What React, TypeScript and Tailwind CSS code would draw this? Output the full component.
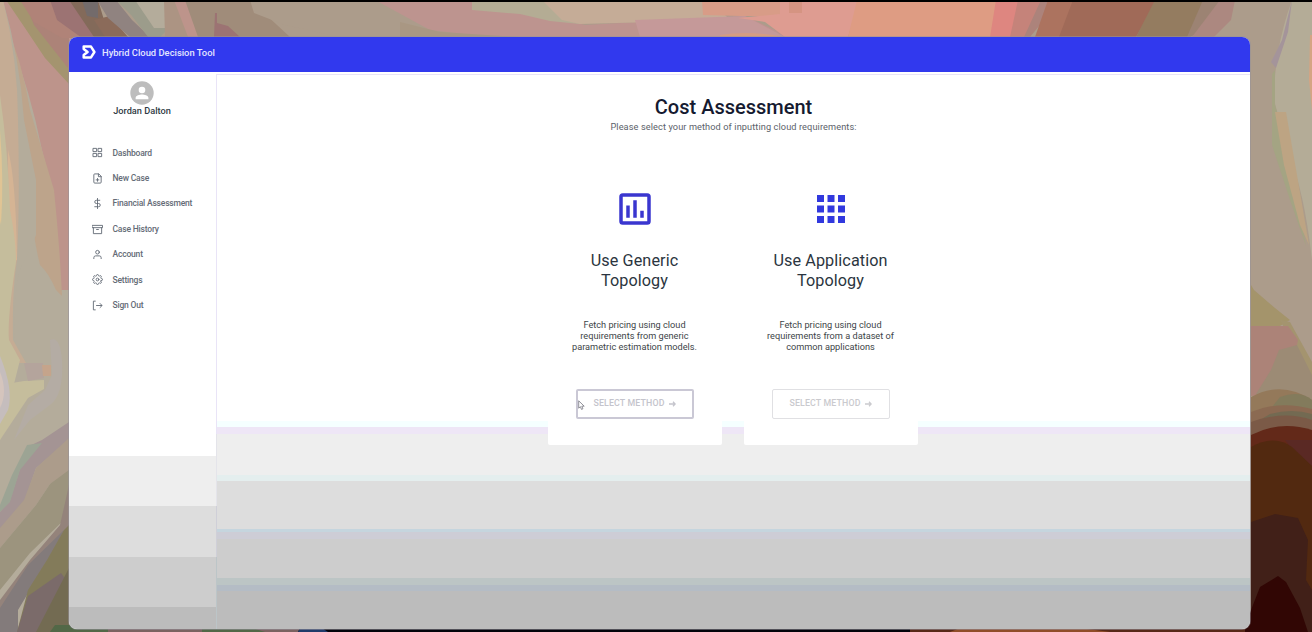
import React from "react";
import { FiGrid, FiFilePlus, FiDollarSign, FiArchive, FiUser, FiSettings } from "react-icons/fi";
import { MdApps } from "react-icons/md";

function SignOutIcon({ className }: { className?: string }) {
  return (
    <svg className={className} viewBox="0 0 24 24" fill="none" stroke="currentColor" strokeWidth="2">
      <path d="M8 2.500H3v19h5M9 12h13M17 7l5 5-5 5" />
    </svg>
  );
}

function ChartIcon({ className }: { className?: string }) {
  return (
    <svg className={className} viewBox="0 0 24 24" fill="currentColor">
      <path
        fillRule="evenodd"
        d="M5 3h14a2 2 0 0 1 2 2v14a2 2 0 0 1-2 2H5a2 2 0 0 1-2-2V5a2 2 0 0 1 2-2Zm0 2v14h14V5Zm2 5h2v7H7Zm4-3h2v10h-2Zm4 6h2v4h-2Z"
      />
    </svg>
  );
}

const navItems = [
  { label: "Dashboard", icon: FiGrid },
  { label: "New Case", icon: FiFilePlus },
  { label: "Financial Assessment", icon: FiDollarSign },
  { label: "Case History", icon: FiArchive },
  { label: "Account", icon: FiUser },
  { label: "Settings", icon: FiSettings },
  { label: "Sign Out", icon: SignOutIcon },
];

function Wallpaper() {
  return (
    <svg className="absolute inset-0 h-full w-full" viewBox="0 0 1312 632" preserveAspectRatio="none">
      <rect width="1312" height="632" fill="#ac9c8b" />
      {/* left side */}
      <path d="M0 0H80V632H0Z" fill="#b4ac9b" />
      <path d="M0 0H80V290H60Q56 200 42 150Q30 90 10 40Z" fill="#bd948b" />
      <path d="M4 20Q22 60 30 110Q42 150 54 190Q60 250 62 296L56 290Q48 272 40 265Q34 240 34 230Q28 120 4 20Z" fill="#bda48b" />
      <path d="M0 0H3Q20 60 24 120Q28 140 36 180V235Q30 250 22 265Q14 280 14 340L26 362H0Z" fill="#b4ac9b" />
      <path d="M0 0H3Q18 60 18 120Q20 200 17 260Q12 290 13 340L26 363H0Z" fill="#c5ac94" />
      <path d="M8 150Q16 180 17 260L12 262Q8 240 8 150Z" fill="#d5b494" />
      <path d="M0 95Q8 150 10 210Q16 240 16 262Q7 320 9 340L20 360L0 440Z" fill="#c5bd9c" />
      <path d="M0 130Q4 180 1 225L0 220Z" fill="#e0c494" />
      <path d="M24 381L44 380V389L28 398L10 425L0 440V385Z" fill="#c5bd9c" />
      <path d="M0 356Q14 390 8 410L0 424Z" fill="#c5bdbd" />
      <path d="M0 372Q8 392 0 408Z" fill="#d5c5bd" />
      <path d="M50 340Q60 335 62 360Q64 395 50 405L30 420L14 440L28 405L45 390L52 375Z" fill="#b4aca4" />
      <path d="M24 363H43L44 378L28 381Z" fill="#b4a49c" />
      <path d="M42 365H51V376H43Z" fill="#c5a48b" />
      <path d="M69 422L42 440L27 447L10 500L0 512V530L25 500L36 468L69 440Z" fill="#a49494" />
      <path d="M27 445L42 443L20 470L10 502L0 512V505L12 475Z" fill="#9ca494" />
      <path d="M69 438L36 468L24 500L0 528V548L36 505L50 484L69 475Z" fill="#ac9c8b" />
      <path d="M69 470L50 484L36 505L0 548V590L30 553L69 515Z" fill="#9c947e" />
      <path d="M69 485L60 525L30 560L0 600V614L18 600L69 540Z" fill="#94837b" />
      <path d="M64 530L48 560L18 610V632H0V608L28 565Z" fill="#837b7b" />
      <path d="M64 530L47 560L28 590L17 632H69V525Z" fill="#837b5a" />
      <path d="M61 573L28 596L17 632H40L69 584Z" fill="#7b6b6a" />
      <path d="M69 568L36 632H69Z" fill="#736b52" />
      {/* top left */}
      <path d="M8 0H53L69 28V80L50 60L26 28Z" fill="#ac8378" />
      <path d="M6 0H24L34 25L68 68L69 84L45 58L25 28Z" fill="#a4946f" />
      <path d="M20 0H72L88 28L94 38H62L34 22Z" fill="#b08378" />
      <path d="M50 0H70L98 38H82L57 20Z" fill="#9c7373" />
      <path d="M69 0H98L104 20L121 37H94Z" fill="#836a5a" />
      <path d="M82 0H98V18L87 16Z" fill="#736b6b" />
      <path d="M94 20L110 16L128 37H105Z" fill="#8b6b5a" />
      <path d="M97 0H116L132 20L150 37H130L108 18Z" fill="#908380" />
      <path d="M116 0H164L169 28L160 37H148L132 16Z" fill="#9c9c8b" />
      <path d="M135 0H164L169 28H154Z" fill="#b4ac9b" />
      <path d="M164 0H174L190 37H165Z" fill="#ac9483" />
      <path d="M174 0H185L202 37H188Z" fill="#bd948b" />
      <path d="M185 0H250L290 37H198Z" fill="#a08c7a" />
      <path d="M215 13H217V23L228 26L240 37H214Z" fill="#9c7373" />
      {/* top centre */}
      <path d="M250 0H380L460 37H340L285 25L254 13Z" fill="#ac9c8b" />
      <path d="M375 0H486L585 25L745 16L790 37H490L430 30Z" fill="#bd948f" />
      <path d="M400 22L440 32L520 37H400Z" fill="#a99783" />
      <path d="M472 0H580V24L550 21L520 14L472 10Z" fill="#b4ac94" />
      <path d="M542 0H710L728 18L690 21L580 24L562 20Z" fill="#c5ac97" />
      <path d="M702 0H790V16H740L703 15Z" fill="#d89c87" />
      <path d="M635 20L745 16L785 37H640Z" fill="#c59999" />
      <path d="M720 35Q750 30 784 37H720Z" fill="#d59c83" />
      <path d="M780 0H860L848 37H785L765 22L738 18L780 14Z" fill="#de9c91" />
      <path d="M789 2H802V13H789Z" fill="#d59482" />
      <path d="M857 0H998L994 37H848Z" fill="#de9c83" />
      <path d="M996 0H1020L1012 37H990Z" fill="#de8680" />
      <path d="M1018 0H1042L1030 37H1010Z" fill="#c5837a" />
      <path d="M1041 0H1054L1044 20L1030 37H1024Z" fill="#ac837b" />
      <path d="M1048 0H1075L1061 37H1035Z" fill="#ac735f" />
      <path d="M1073 0H1158L1136 37H1059Z" fill="#a06a58" />
      <path d="M1155 0H1205L1190 37H1136Z" fill="#947c60" />
      <path d="M1203 0H1222L1205 30L1190 37H1187Z" fill="#9c8373" />
      <path d="M1220 0H1235L1231 20L1214 37H1192Z" fill="#ac8880" />
      {/* right side */}
      <path d="M1292 0H1312V260Q1304 190 1290 160L1274 100Q1274 50 1292 0Z" fill="#b4ac97" />
      <path d="M1292 0L1288 32L1276 68L1271 62L1282 40Z" fill="#a4949a" />
      <path d="M1272 74L1275 70L1275 105L1290 155L1306 246L1290 200L1272 145Z" fill="#a4a483" />
      <path d="M1275 112H1286L1297 175L1309 245L1300 225L1284 165Z" fill="#bda483" />
      <path d="M1310 35H1312V110L1309 80Z" fill="#d5a483" />
      <path d="M1251 285L1254 290L1275 308L1290 320L1280 326H1251Z" fill="#a4946b" />
      <path d="M1280 320L1290 322L1312 362V380L1296 350Z" fill="#a4946f" />
      <path d="M1251 326H1288L1298 340L1296 350L1280 350L1262 395L1251 396Z" fill="#ac8378" />
      <path d="M1279 350L1297 345L1312 375V405L1270 394H1256L1271 370Z" fill="#9c8b75" />
      <path d="M1251 397Q1282 380 1312 400V415L1280 405L1251 415Z" fill="#94795a" />
      <path d="M1280 397Q1300 390 1312 400V412H1268Z" fill="#837b5c" />
      <path d="M1251 412Q1280 400 1312 409V425H1251Z" fill="#8b6a52" />
      <path d="M1270 414Q1292 408 1312 414V420H1260Z" fill="#736a52" />
      <path d="M1251 422Q1285 410 1312 420V450H1251Z" fill="#7b5a47" />
      <path d="M1251 435Q1280 420 1312 430V632H1251Z" fill="#632919" />
      <path d="M1285 440H1312V466L1300 460Z" fill="#5a2924" />
      <path d="M1251 447Q1275 434 1292 447L1312 466V632H1251Z" fill="#522910" />
      <path d="M1251 522L1275 514L1298 518L1308 540L1306 580L1312 590V632H1251Z" fill="#412018" />
      <path d="M1251 610L1260 587L1278 576L1286 582L1300 608L1308 632H1244Z" fill="#310604" />
      {/* bottom edge */}
      <path d="M55 625H290L300 632H50Z" fill="#526847" />
      <path d="M108 628H202V632H108ZM252 628H300V632H265Z" fill="#7b6260" />
      <path d="M300 628H910V632H298Z" fill="#02030a" />
      <path d="M300 628H322L328 632H298Z" fill="#203b6a" />
      <path d="M910 628H1245V632H910Z" fill="#572817" />
      <path d="M960 628H1080L1110 632H950Z" fill="#904d28" />
      <rect width="1312" height="2" fill="#000" />
    </svg>
  );
}

function MethodCard({
  icon: Icon,
  iconClass,
  title,
  description,
  active,
}: {
  icon: React.ComponentType<{ className?: string }>;
  iconClass: string;
  title: string[];
  description: string[];
  active?: boolean;
}) {
  return (
    <section className="flex h-[265px] w-[174px] flex-col items-center rounded-b-[2px] bg-white text-center">
      <div className="flex h-[57px] items-center justify-center">
        <Icon className={iconClass} />
      </div>
      <h2 className="mt-[14px] text-[16.200px] leading-5 tracking-[0.1px] text-[#2b3540]">
        {title.map((line) => (
          <span key={line} className="block whitespace-nowrap">{line}</span>
        ))}
      </h2>
      <p className="mt-[28px] text-[9.200px] leading-[11px] text-[#404548]">
        {description.map((line) => (
          <span key={line} className="block whitespace-nowrap">{line}</span>
        ))}
      </p>
      <div className="mt-[37px]">
        <button
          className={
            active
              ? "relative flex h-[30px] w-[118px] items-center justify-center gap-[4px] rounded-[2px] border-2 border-[#cac8d5] text-[8.800px] font-medium tracking-[0.150px] text-[#c4c4cc]"
              : "relative flex h-[30px] w-[118px] items-center justify-center gap-[4px] rounded-[2px] border border-[#e0e0e3] text-[8.800px] font-medium tracking-[0.150px] text-[#cacace]"
          }
        >
          <span className="whitespace-nowrap">SELECT METHOD</span>
          <svg className="h-[6px] w-[7px]" viewBox="0 0 7 6" fill="none" stroke="currentColor" strokeWidth="1.3">
            <path d="M0 3H6.200M4 .8 6.200 3 4 5.200" />
          </svg>
          {active && (
            <svg className="absolute top-[9px] left-0 h-[11px] w-[7px]" viewBox="0 0 7 11">
              <path d="M.7.800v7.400l1.700-1.500 1.100 2.700 1.400-.6-1.100-2.600h2.400Z" fill="#fff" stroke="#85858d" strokeWidth=".9" />
            </svg>
          )}
        </button>
      </div>
    </section>
  );
}

export default function App() {
  return (
    <div className="relative h-[632px] w-[1312px] overflow-hidden font-['Roboto','Liberation_Sans',sans-serif]">
      <Wallpaper />
      <div className="relative flex h-full flex-col pt-[37px] pr-[62px] pb-[3px] pl-[69px]">
        <div className="flex h-[592px] w-[1181px] flex-col overflow-hidden rounded-[8px] bg-white shadow-[0_0_0_1px_rgba(150,145,155,0.55)]">
          <header className="flex h-[35px] shrink-0 items-center bg-[#3139ee] pl-[13px] text-white">
            <svg className="mb-[5px] h-[14px] w-[14px]" viewBox="0 0 14 14" fill="none" stroke="white" strokeWidth="2.500" strokeLinejoin="round">
              <path d="M1.700 1.600H9L12.400 7 9 12.400H1.700V10L5.600 7 1.700 4Z" />
            </svg>
            <span className="mb-[2px] ml-[6px] text-[9.400px] font-medium whitespace-nowrap text-[#e4e6ff]">
              Hybrid Cloud Decision Tool
            </span>
          </header>
          <div className="flex min-h-0 flex-1">
            <aside className="flex w-[147px] shrink-0 flex-col bg-[linear-gradient(to_bottom,#fff_384px,#eee_384px,#eee_434px,#ddd_434px,#ddd_485px,#cdcdcd_485px,#cdcdcd_535px,#bcbcbc_535px)]">
              <div className="flex flex-col items-center pt-[9px] pr-px">
                <svg className="h-6 w-6" viewBox="0 0 24 24">
                  <circle cx="12" cy="12" r="11.700" fill="#bdbdbd" />
                  <circle cx="12" cy="9" r="3.300" fill="#fff" />
                  <path d="M5.600 18.300V16.800c0-2.200 4.200-3.300 6.400-3.300s6.400 1.100 6.400 3.300v1.500Z" fill="#fff" />
                </svg>
                <div className="text-[9.200px] leading-3 font-medium text-[#303a44]">Jordan Dalton</div>
              </div>
              <nav className="mt-[23.300px] flex flex-col">
                {navItems.map(({ label, icon: Icon }) => (
                  <a key={label} className="flex h-[25.400px] items-center pl-[23px] text-[8.500px] font-medium tracking-[-0.190px] text-[#646b76]">
                    <Icon className="h-[11px] w-[11px] shrink-0" />
                    <span className="ml-[9.500px] whitespace-nowrap">{label}</span>
                  </a>
                ))}
              </nav>
            </aside>
            <div className="mt-[2px] w-px shrink-0 bg-[linear-gradient(to_bottom,#e9e4f7_360px,#e4e4ea_360px,#e4e4ea_432px,#cfcfd8_432px,#cfcfd8_483px,#bcc5c8_483px)]" />
            <main className="mt-[2px] flex flex-1 flex-col items-center border-t border-[#e9e4f7] bg-[linear-gradient(to_bottom,#fff_346px,#f5ffff_346px,#f5ffff_352px,#eee6f6_352px,#eee6f6_359px,#eee_359px,#eee_400px,#e4eeee_400px,#e4eeee_406px,#ddd_406px,#ddd_454px,#c5d5de_454px,#c5d5de_457px,#cdcdd6_457px,#cdcdd6_464px,#cdcdcd_464px,#cdcdcd_503px,#bcc5c5_503px,#bcc5c5_510px,#b4bcc5_510px,#b4bcc5_516px,#bcbcbc_516px)]">
              <h1 className="mt-[18px] text-[20px] leading-7 font-medium text-[#151a30]">Cost Assessment</h1>
              <p className="text-[9.200px] leading-3 tracking-[0.1px] text-[#5b6169]">
                Please select your method of inputting cloud requirements:
              </p>
              <div className="mt-[47px] flex gap-[22px] pr-[2px]">
                <MethodCard
                  icon={ChartIcon}
                  iconClass="h-[42px] w-[42px] text-[#3a36cf]"
                  title={["Use Generic", "Topology"]}
                  description={["Fetch pricing using cloud", "requirements from generic", "parametric estimation models."]}
                  active
                />
                <MethodCard
                  icon={MdApps}
                  iconClass="h-[42px] w-[42px] text-[#3139de]"
                  title={["Use Application", "Topology"]}
                  description={["Fetch pricing using cloud", "requirements from a dataset of", "common applications"]}
                />
              </div>
            </main>
          </div>
        </div>
      </div>
    </div>
  );
}
